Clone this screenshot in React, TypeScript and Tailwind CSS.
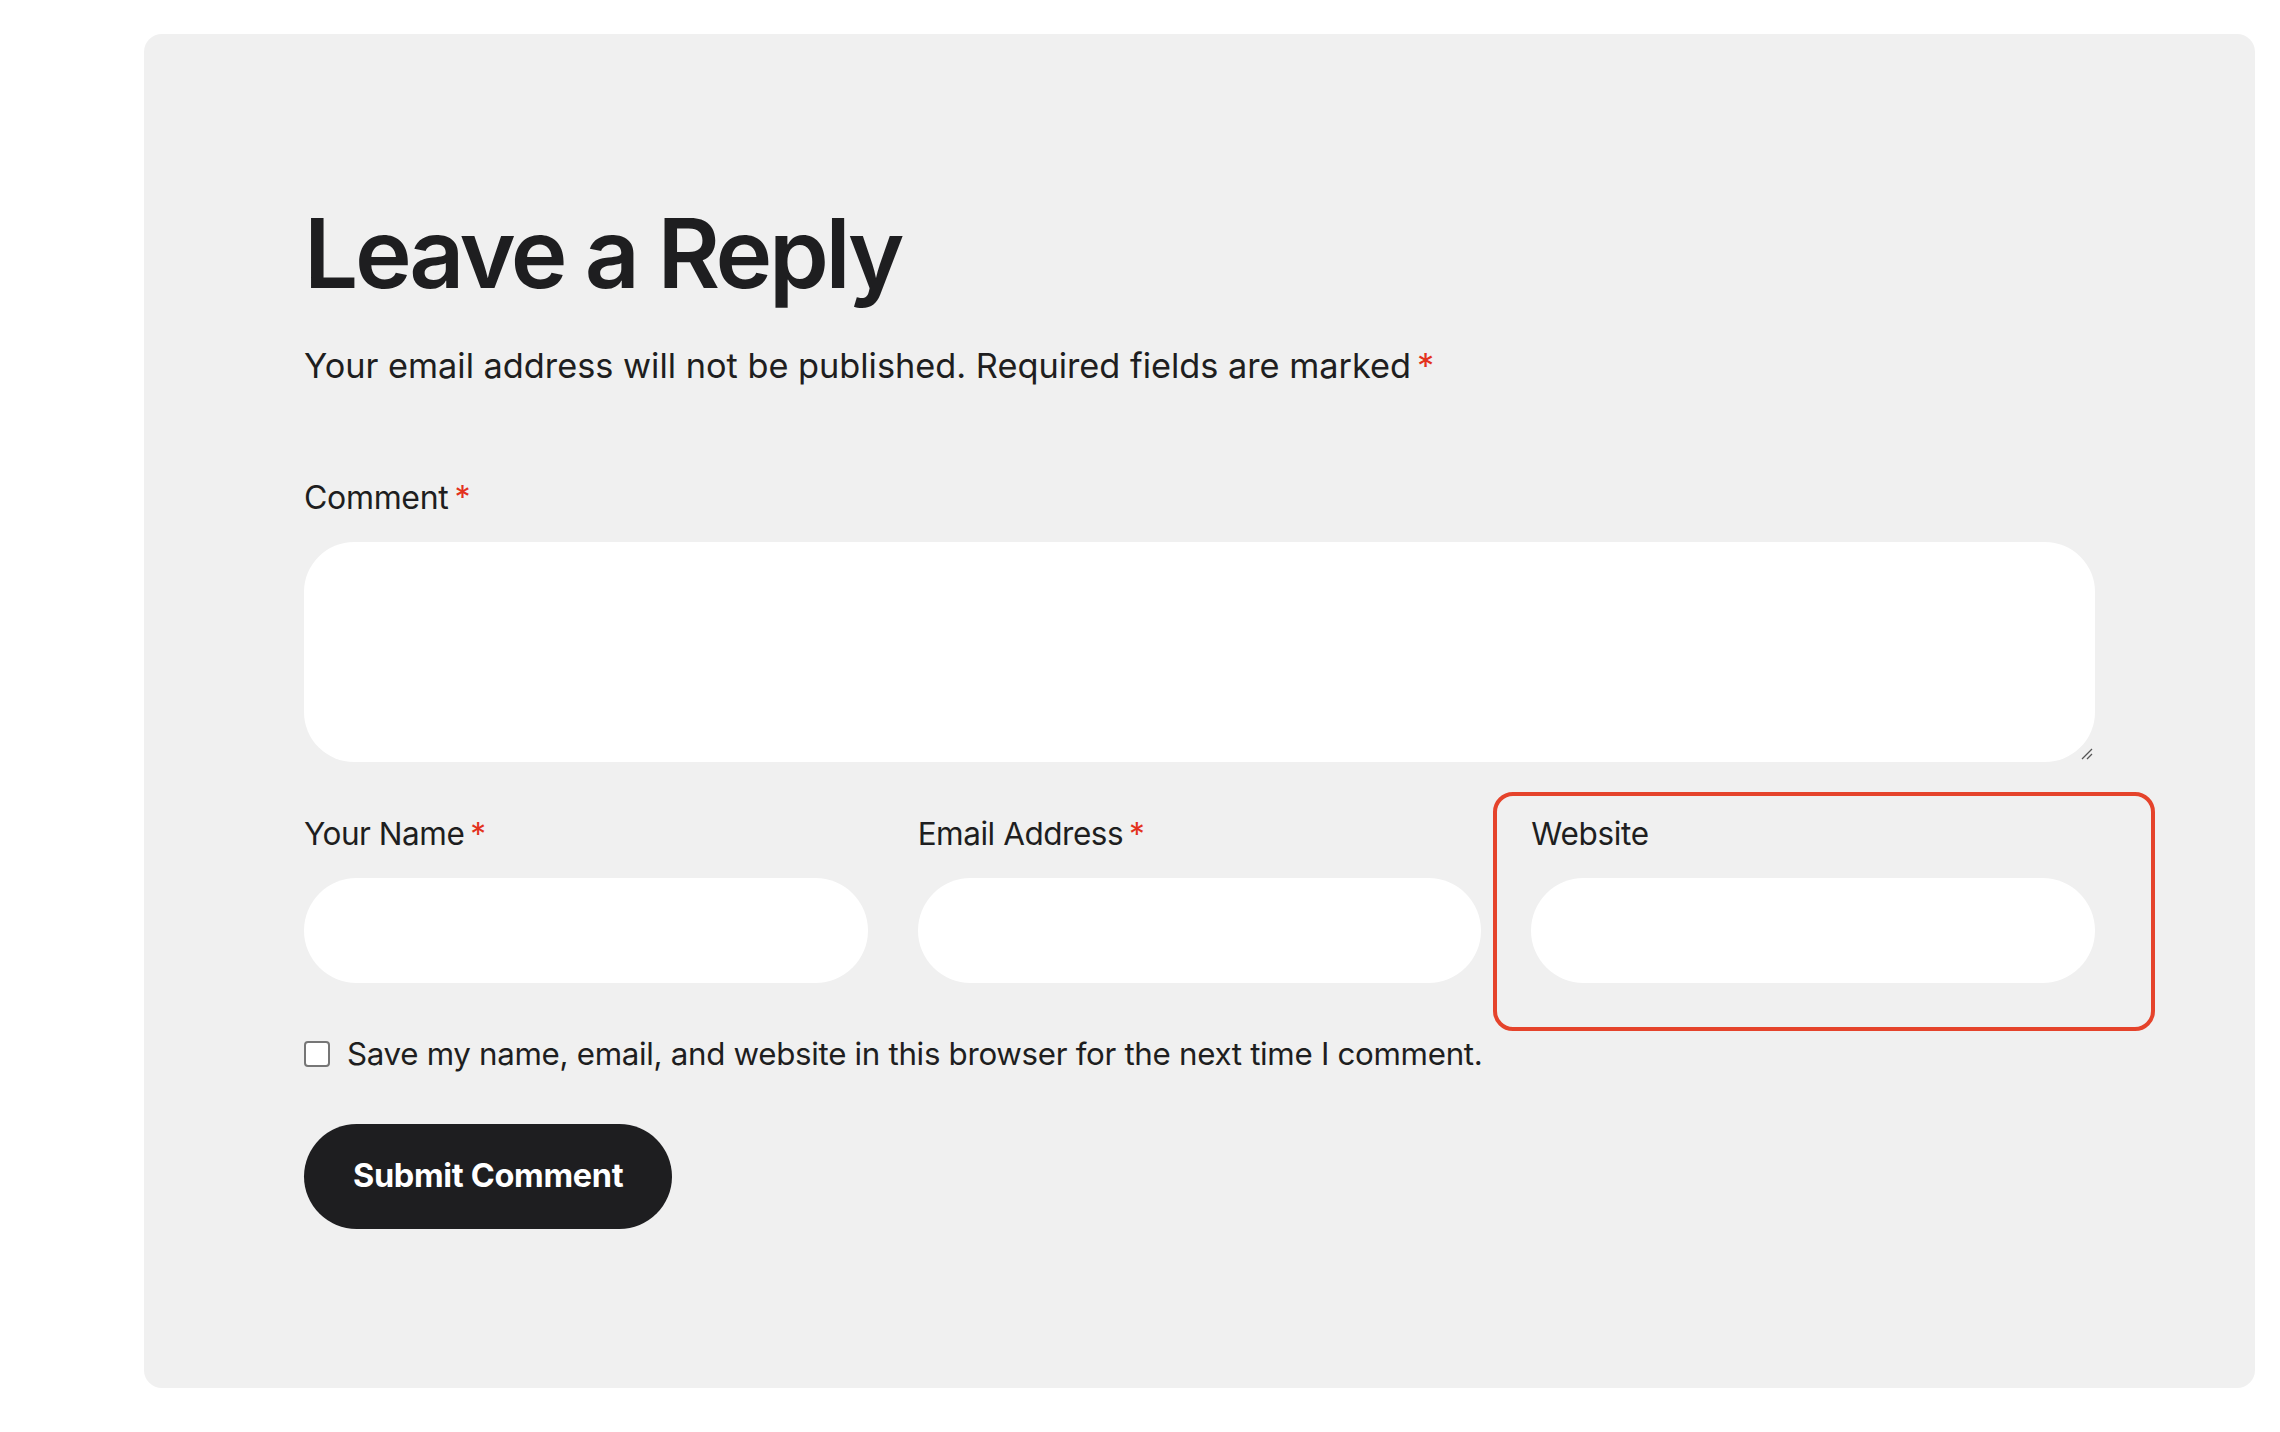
import React from "react";

const Star = () => <span className="text-[#e3321d] ml-[6px]">*</span>;

export default function App() {
  return (
    <div className="w-[2280px] h-[1432px] bg-white pt-[34px] pl-[144px]" style={{ fontFamily: "Inter, 'Noto Sans', sans-serif" }}>
      <div className="relative w-[2111px] bg-[#f0f0f0] rounded-[18px] px-[160px] pt-[171px] pb-[159px] text-[#1e1e20]">
        <h2 className="text-[96px] leading-[96px] font-semibold tracking-[-0.035em]">Leave a Reply</h2>
        <p className="mt-[41px] text-[34.3px] leading-[48px]">
          Your email address will not be published. Required fields are marked<Star />
        </p>
        <label className="block mt-[84px] text-[32px] leading-[48px] tracking-[-0.01em]">
          Comment<Star />
        </label>
        <div className="relative mt-[20px]">
          <textarea className="block w-full h-[220px] bg-white rounded-[50px] outline-none border-0 resize-none" />
          <svg className="absolute right-[2px] bottom-[2px] w-[12px] h-[12px]" viewBox="0 0 12 12">
            <path d="M1 11 L11 1 M6 11 L11 6" stroke="#555" strokeWidth="1.3" />
          </svg>
        </div>
        <div className="mt-[48px] grid grid-cols-3 gap-[50px]">
          <div>
            <div className="text-[31.5px] leading-[48px] tracking-[-0.015em]">Your Name<Star /></div>
            <div className="mt-[20px] h-[105px] bg-white rounded-full" />
          </div>
          <div>
            <div className="text-[31.5px] leading-[48px] tracking-[-0.015em]">Email Address<Star /></div>
            <div className="mt-[20px] h-[105px] bg-white rounded-full" />
          </div>
          <div>
            <div className="text-[31.5px] leading-[48px] tracking-[-0.01em]">Website</div>
            <div className="mt-[20px] h-[105px] bg-white rounded-full" />
          </div>
        </div>
        <div className="mt-[47px] flex items-center gap-[17px] text-[31.3px] leading-[48px] tracking-[-0.01em]">
          <span className="w-[26px] h-[26px] bg-white border-2 border-[#767676] rounded-[4px]" />
          <span>Save my name, email, and website in this browser for the next time I comment.</span>
        </div>
        <button className="mt-[46px] h-[105px] px-[49px] rounded-full bg-[#1e1e20] text-white text-[32.5px] font-bold tracking-[-0.01em]">
          Submit Comment
        </button>
        <div className="absolute left-[1349px] top-[758px] w-[662px] h-[239px] border-4 border-[#e5432b] rounded-[20px] pointer-events-none" />
      </div>
    </div>
  );
}
